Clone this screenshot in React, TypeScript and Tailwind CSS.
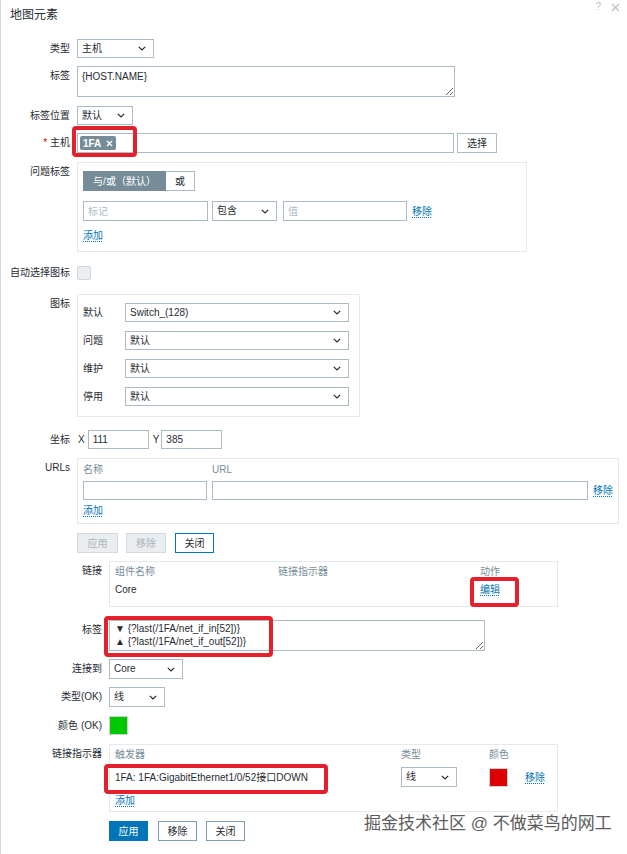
import React from "react";

const font = "font-['Liberation_Sans','Noto_Sans_CJK_SC',sans-serif]";

function Chevron() {
  return (
    <svg width="8" height="5" viewBox="0 0 8 5" className="shrink-0">
      <path d="M0.8 0.8l3.2 3.2 3.2-3.2" fill="none" stroke="#1f2c33" strokeWidth="1.2" />
    </svg>
  );
}

function Select({ value, className }: { value: string; className: string }) {
  return (
    <div
      className={`flex items-center justify-between border border-[#acbbc2] bg-white pl-[4px] pr-[7px] leading-none ${className}`}
    >
      <span>{value}</span>
      <Chevron />
    </div>
  );
}

function Input({ value, placeholder, className }: { value?: string; placeholder?: string; className: string }) {
  return (
    <div className={`flex h-5 items-center border border-[#acbbc2] bg-white pl-[4px] ${className}`}>
      {value ? <span>{value}</span> : <span className="text-[#acbbc2]">{placeholder}</span>}
    </div>
  );
}

function Link({ children }: { children: React.ReactNode }) {
  return (
    <span className="text-[#0275b8] underline decoration-dotted underline-offset-2">{children}</span>
  );
}

function Row({
  label,
  className,
  children,
  wide,
}: {
  label: React.ReactNode;
  className: string;
  children: React.ReactNode;
  wide?: boolean;
}) {
  return (
    <div className={`grid gap-x-[7px] ${wide ? "grid-cols-[101px_1fr]" : "grid-cols-[69px_1fr]"} ${className}`}>
      <div className="text-right leading-[19px] whitespace-nowrap">{label}</div>
      <div className="flex items-start">{children}</div>
    </div>
  );
}

export default function App() {
  return (
    <div className={`relative h-[854px] w-[627px] overflow-hidden border-l border-[#d6d6d6] bg-white text-[10px] text-[#1f2c33] ${font}`}>
      {/* Header */}
      <div className="flex h-[39px] items-start justify-between">
        <div className="pl-[9px] pt-[8px] text-[12px] leading-[15px]">地图元素</div>
        <div className="flex items-center gap-[10px] pr-[7px] pt-[1px] text-[#b4c0c6]">
          <span className="text-[10px] leading-[12px]">?</span>
          <svg width="9" height="9" viewBox="0 0 9 9">
            <path d="M1 1l7 7M8 1l-7 7" stroke="#b4c0c6" strokeWidth="1.1" />
          </svg>
        </div>
      </div>

      <Row label="类型" className="">
        <Select value="主机" className="h-[19px] w-[77px]" />
      </Row>

      <Row label="标签" className="mt-[8px]">
        <textarea
          readOnly
          defaultValue="{HOST.NAME}"
          className="h-[31px] w-[378px] border border-[#acbbc2] px-[4px] pt-[3px] text-[10px] leading-[14px] outline-none"
        />
      </Row>

      <Row label="标签位置" className="mt-[9px]">
        <Select value="默认" className="h-[19px] w-[56px]" />
      </Row>

      <Row
        label={
          <span>
            <span className="text-[#d40000]">*</span> 主机
          </span>
        }
        className="mt-[8px]"
      >
        <div className="flex h-5 w-[377px] items-center border border-[#acbbc2] pl-[2px]">
          <span className="flex h-[14px] items-center gap-[5px] rounded-[2px] bg-[#768d99] px-[3px] font-bold text-white">
            1FA
            <svg width="7" height="7" viewBox="0 0 7 7">
              <path d="M1 1l5 5M6 1l-5 5" stroke="#fff" strokeWidth="1.4" />
            </svg>
          </span>
        </div>
        <div className="ml-[3px] flex h-5 w-[40px] items-center justify-center border border-[#acbbc2] bg-white">选择</div>
      </Row>

      <Row label="问题标签" className="mt-[9px]">
        <div className="w-[450px] border border-[#e6e9eb] px-[5px] pt-[8px] pb-[8px]">
          <div className="flex">
            <div className="flex h-5 w-[83px] items-center justify-center bg-[#768d99] text-white">与/或（默认）</div>
            <div className="flex h-5 w-[29px] items-center justify-center border border-l-0 border-[#acbbc2]">或</div>
          </div>
          <div className="mt-[10px] flex items-center">
            <Input placeholder="标记" className="w-[125px]" />
            <Select value="包含" className="ml-[4px] h-5 w-[65px]" />
            <Input placeholder="值" className="ml-[6px] w-[124px]" />
            <span className="ml-[5px]">
              <Link>移除</Link>
            </span>
          </div>
          <div className="mt-[8px] leading-[14px]">
            <Link>添加</Link>
          </div>
        </div>
      </Row>

      <Row label="自动选择图标" className="mt-[11px]">
        <div className="mt-[3px] h-[14px] w-[14px] rounded-[2px] border border-[#cfd6da] bg-[#ebeef0]" />
      </Row>

      <Row label="图标" className="mt-[12px]">
        <div className="flex w-[283px] flex-col gap-[9px] border border-[#e6e9eb] pt-[8px] pb-[10px] pl-[5px]">
          {[
            ["默认", "Switch_(128)"],
            ["问题", "默认"],
            ["维护", "默认"],
            ["停用", "默认"],
          ].map(([l, v]) => (
            <div key={l} className="flex items-center">
              <span className="w-[42px] leading-[19px]">{l}</span>
              <Select value={v} className="h-[19px] w-[224px]" />
            </div>
          ))}
        </div>
      </Row>

      <Row label="坐标" className="mt-[13px]">
        <div className="flex h-[19px] items-center">
          <span className="ml-[1px] mr-[3px]">X</span>
          <Input value="111" className="h-[19px] w-[61px]" />
          <span className="ml-[4px] mr-[2px]">Y</span>
          <Input value="385" className="h-[19px] w-[61px]" />
        </div>
      </Row>

      <Row label="URLs" className="mt-[9px]">
        <div className="w-[542px] border border-[#e6e9eb] pl-[5px] pt-[4px] pb-[5px]">
          <div className="flex leading-[14px] text-[#768d99]">
            <span className="w-[129px]">名称</span>
            <span>URL</span>
          </div>
          <div className="mt-[4px] flex items-center">
            <Input className="h-[19px] w-[124px]" />
            <Input className="ml-[5px] h-[19px] w-[376px]" />
            <span className="ml-[5px]">
              <Link>移除</Link>
            </span>
          </div>
          <div className="mt-[4px] leading-[14px]">
            <Link>添加</Link>
          </div>
        </div>
      </Row>

      <Row label="" className="mt-[9px]">
        <div className="flex">
          <div className="flex h-5 w-[41px] items-center justify-center border border-[#d3d9dc] bg-[#ebeef0] text-[#a9b5bb]">应用</div>
          <div className="ml-[8px] flex h-5 w-[40px] items-center justify-center border border-[#d3d9dc] bg-[#ebeef0] text-[#a9b5bb]">移除</div>
          <div className="ml-[9px] flex h-5 w-[39px] items-center justify-center border border-[#0275b8] bg-white text-[#1f2c33]">关闭</div>
        </div>
      </Row>

      {/* Link form */}
      <Row label="链接" wide className="mt-[8px]">
        <div className="w-[449px] border border-[#e6e9eb] pl-[5px] pt-[3px] pb-[9px]">
          <div className="grid grid-cols-[163px_202px_1fr] leading-[14px] text-[#768d99]">
            <span>组件名称</span>
            <span>链接指示器</span>
            <span>动作</span>
          </div>
          <div className="mt-[4px] grid grid-cols-[163px_202px_1fr] leading-[14px]">
            <span>Core</span>
            <span />
            <span>
              <Link>编辑</Link>
            </span>
          </div>
        </div>
      </Row>

      <Row label="标签" wide className="mt-[13px]">
        <textarea
          readOnly
          defaultValue={"▼ {?last(/1FA/net_if_in[52])}\n▲ {?last(/1FA/net_if_out[52])}"}
          className="h-[31px] w-[376px] resize border border-[#acbbc2] px-[5px] pt-[1px] text-[10px] leading-[13px] outline-none"
        />
      </Row>

      <Row label="连接到" wide className="mt-[8px]">
        <Select value="Core" className="h-5 w-[74px]" />
      </Row>

      <Row label="类型(OK)" wide className="mt-[8px]">
        <Select value="线" className="h-5 w-[56px]" />
      </Row>

      <Row label="颜色 (OK)" wide className="mt-[9px]">
        <div className="h-[19px] w-[19px] border border-[#d0d0d0] bg-[#00c800]" />
      </Row>

      <Row label="链接指示器" wide className="mt-[9px]">
        <div className="w-[449px] border border-[#e6e9eb] pl-[5px] pt-[3px] pb-[3px]">
          <div className="grid grid-cols-[286px_88px_1fr] leading-[14px] text-[#768d99]">
            <span>触发器</span>
            <span>类型</span>
            <span>颜色</span>
          </div>
          <div className="mt-[5px] grid grid-cols-[286px_88px_36px_1fr] items-center">
            <span>1FA: 1FA:GigabitEthernet1/0/52接口DOWN</span>
            <Select value="线" className="h-5 w-[56px]" />
            <div className="h-[19px] w-[19px] border border-[#d0d0d0] bg-[#dc0000]" />
            <span>
              <Link>移除</Link>
            </span>
          </div>
          <div className="mt-[7px] leading-[14px]">
            <Link>添加</Link>
          </div>
        </div>
      </Row>

      <Row label="" wide className="mt-[9px]">
        <div className="flex">
          <div className="flex h-5 w-[39px] items-center justify-center border border-[#0275b8] bg-[#0275b8] text-white">应用</div>
          <div className="ml-[10px] flex h-5 w-[39px] items-center justify-center border border-[#7f9db1] bg-white">移除</div>
          <div className="ml-[9px] flex h-5 w-[39px] items-center justify-center border border-[#7f9db1] bg-white">关闭</div>
        </div>
      </Row>

      {/* Red annotation frames */}
      <div className="absolute left-[71px] top-[126px] h-[31px] w-[65px] rounded-[4px] border-[4px] border-[#e3202c]" />
      <div className="absolute left-[469px] top-[577px] h-[30px] w-[49px] rounded-[4px] border-[4px] border-[#e3202c]" />
      <div className="absolute left-[103px] top-[616px] h-[41px] w-[169px] rounded-[4px] border-[4px] border-[#e3202c]" />
      <div className="absolute left-[103px] top-[764px] h-[30px] w-[224px] rounded-[4px] border-[4px] border-[#e3202c]" />

      {/* Watermark */}
      <div className="absolute left-[363px] top-[813px] text-[17px] leading-[22px] text-[#5c5c5c] [text-shadow:0_0_2px_#ffffff,0_0_1px_#ffffff]">
        掘金技术社区 @ 不做菜鸟的网工
      </div>
    </div>
  );
}
